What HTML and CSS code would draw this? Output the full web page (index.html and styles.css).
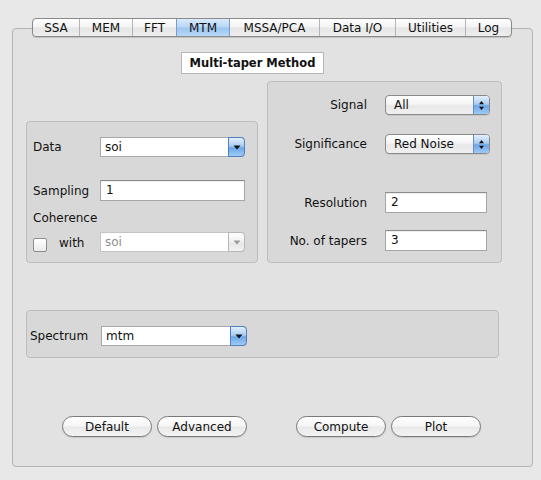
FILE: index.html
```html
<!DOCTYPE html>
<html>
<head>
<meta charset="utf-8">
<link rel="stylesheet" href="styles.css">
</head>
<body>
<div class="window">
  <div class="tabs">
    <div class="tab">SSA</div>
    <div class="tab">MEM</div>
    <div class="tab">FFT</div>
    <div class="tab selected">MTM</div>
    <div class="tab">MSSA/PCA</div>
    <div class="tab">Data I/O</div>
    <div class="tab">Utilities</div>
    <div class="tab">Log</div>
  </div>
  <div class="panel">
    <div class="title">Multi-taper Method</div>
    <div class="groups">
      <div class="group left-group">
        <div class="lrow first">
          <span class="label">Data</span>
          <div class="popup"><span class="ptext">soi</span><span class="pbtn"><svg width="8" height="5" viewBox="0 0 8 5"><path d="M0.5 0.5 L7.5 0.5 L4 4.5 Z" fill="#111"/></svg></span></div>
        </div>
        <div class="lrow sampling">
          <span class="label">Sampling</span>
          <div class="field">1</div>
        </div>
        <div class="coh">Coherence</div>
        <div class="lrow withrow">
          <span class="label checklabel"><span class="check"></span><span>with</span></span>
          <div class="popup disabled"><span class="ptext">soi</span><span class="pbtn"><svg width="8" height="5" viewBox="0 0 8 5"><path d="M0.5 0.5 L7.5 0.5 L4 4.5 Z" fill="#9a9a9a"/></svg></span></div>
        </div>
      </div>
      <div class="group right-group">
        <div class="rrow">
          <span class="rlabel">Signal</span>
          <div class="stepper"><span class="stext">All</span><span class="sbtn"><svg width="7" height="11" viewBox="0 0 7 11"><path d="M3.5 1 L6 4.2 L1 4.2 Z M1 6.8 L6 6.8 L3.5 10 Z" fill="#111"/></svg></span></div>
        </div>
        <div class="rrow sig">
          <span class="rlabel">Significance</span>
          <div class="stepper"><span class="stext">Red Noise</span><span class="sbtn"><svg width="7" height="11" viewBox="0 0 7 11"><path d="M3.5 1 L6 4.2 L1 4.2 Z M1 6.8 L6 6.8 L3.5 10 Z" fill="#111"/></svg></span></div>
        </div>
        <div class="rrow res">
          <span class="rlabel">Resolution</span>
          <div class="field rfield">2</div>
        </div>
        <div class="rrow tap">
          <span class="rlabel">No. of tapers</span>
          <div class="field rfield">3</div>
        </div>
      </div>
    </div>
    <div class="group spectrum">
      <span class="label slabel">Spectrum</span>
      <div class="popup"><span class="ptext">mtm</span><span class="pbtn"><svg width="8" height="5" viewBox="0 0 8 5"><path d="M0.5 0.5 L7.5 0.5 L4 4.5 Z" fill="#111"/></svg></span></div>
    </div>
    <div class="buttons">
      <div class="btn">Default</div>
      <div class="btn">Advanced</div>
      <div class="btn spacer">Compute</div>
      <div class="btn">Plot</div>
    </div>
  </div>
</div>
</body>
</html>
```

FILE: styles.css
```css
* { box-sizing: border-box; }
html, body { margin: 0; padding: 0; }
body {
  background: #e8e8e8;
  font-family: "DejaVu Sans", "Noto Sans", sans-serif;
  font-size: 12px;
  color: #111;
}
.window {
  width: 541px;
  height: 480px;
  padding-top: 18px;
  overflow: hidden;
}
.tabs {
  position: relative;
  z-index: 1;
  display: flex;
  width: 480px;
  height: 19px;
  margin-left: 32px;
  border: 1px solid #8a8a8a;
  border-radius: 4px;
  background: linear-gradient(#ffffff, #f3f3f3 45%, #e6e6e6 55%, #eeeeee);
  box-shadow: 0 1px 1px rgba(0,0,0,0.15);
  overflow: hidden;
}
.tab {
  height: 100%;
  display: flex;
  align-items: center;
  justify-content: center;
  border-left: 1px solid #b5b5b5;
}
.tab:first-child { border-left: none; }
.tab:nth-child(1) { width: 46px; }
.tab:nth-child(2) { width: 53px; }
.tab:nth-child(3) { width: 44px; }
.tab:nth-child(4) { width: 53px; }
.tab:nth-child(5) { width: 90px; }
.tab:nth-child(6) { width: 76px; }
.tab:nth-child(7) { width: 70px; }
.tab:nth-child(8) { flex: 1; }
.tab.selected {
  background: linear-gradient(#d9eafb, #b9d7f6 45%, #9cc5f0 55%, #b8d8f8);
  border-left-color: #7a9cc6;
}
.tab.selected + .tab { border-left-color: #7a9cc6; }
.panel {
  width: 521px;
  height: 439px;
  margin: -9px 0 0 12px;
  border: 1px solid #b4b4b4;
  border-radius: 4px;
  background: #e2e2e2;
  padding: 23px 0 0 13px;
}
.title {
  width: 143px;
  height: 22px;
  margin-left: 155px;
  background: #fff;
  border: 1px solid #b8b8b8;
  font-weight: bold;
  font-size: 11.5px;
  display: flex;
  align-items: center;
  justify-content: center;
}
.groups {
  display: flex;
  align-items: flex-end;
  gap: 9px;
  margin-top: 7px;
  height: 182px;
}
.group {
  background: #d8d8d8;
  border: 1px solid #bdbdbd;
  border-radius: 4px;
}
.left-group {
  width: 232px;
  height: 142px;
  padding: 15px 12px 0 6px;
}
.lrow {
  display: flex;
  align-items: center;
  height: 20px;
}
.label { width: 67px; flex: none; }
.sampling { margin-top: 23px; height: 21px; }
.coh { margin-top: 8px; height: 19px; line-height: 19px; }
.withrow { margin-top: 4px; }
.checklabel { display: flex; align-items: center; }
.check {
  width: 14px;
  height: 14px;
  border: 1px solid #8d8d8d;
  border-radius: 2px;
  background: linear-gradient(#ffffff, #ececec);
  margin-right: 12px;
  margin-top: 5px;
}
.checklabel span:last-child { margin-top: 2px; }
.popup {
  width: 146px;
  height: 20px;
  display: flex;
  background: #fff;
  border: 1px solid #a8a8a8;
  border-right: none;
  border-radius: 0 4px 4px 0;
}
.ptext { flex: 1; padding-left: 4px; line-height: 18px; }
.pbtn {
  width: 17px;
  margin: -1px 0;
  border: 1px solid #4f7fbf;
  border-radius: 0 4px 4px 0;
  background: linear-gradient(#e4effc, #a8cdf3 45%, #6da6e9 55%, #9fcaf6);
  display: flex;
  align-items: center;
  justify-content: center;
}
.popup.disabled { border-color: #c4c4c4; }
.popup.disabled .ptext { color: #8f8f8f; }
.popup.disabled .pbtn {
  border-color: #b6b6b6;
  background: linear-gradient(#ffffff, #f0f0f0 50%, #e6e6e6 55%, #f2f2f2);
}
.field {
  width: 146px;
  height: 21px;
  background: #fff;
  border: 1px solid #a6a6a6;
  border-top-color: #8c8c8c;
  box-shadow: inset 0 1px 1px rgba(0,0,0,0.08);
  padding-left: 5px;
  line-height: 19px;
}
.right-group {
  width: 235px;
  height: 182px;
  padding: 13px 0 0 0;
}
.rrow {
  display: flex;
  align-items: center;
  height: 20px;
}
.rlabel {
  width: 99px;
  text-align: right;
  margin-right: 18px;
  flex: none;
}
.sig { margin-top: 19px; }
.res { margin-top: 38px; height: 21px; }
.tap { margin-top: 17px; height: 21px; }
.rfield { width: 102px; }
.stepper {
  width: 105px;
  height: 20px;
  display: flex;
  border: 1px solid #8a8a8a;
  border-radius: 4px;
  background: linear-gradient(#ffffff, #f4f4f4 45%, #e8e8e8 55%, #f0f0f0);
  overflow: hidden;
  box-shadow: 0 1px 0 rgba(0,0,0,0.08);
}
.stext { flex: 1; padding-left: 8px; line-height: 18px; }
.sbtn {
  width: 16px;
  border-left: 1px solid #6b8fbd;
  background: linear-gradient(#e4effc, #a8cdf3 45%, #6da6e9 55%, #9fcaf6);
  display: flex;
  align-items: center;
  justify-content: center;
}
.spectrum {
  margin-top: 47px;
  width: 473px;
  height: 48px;
  display: flex;
  align-items: flex-start;
  padding: 15px 0 0 3px;
}
.slabel { width: 71px; line-height: 20px; }
.buttons {
  display: flex;
  margin-top: 58px;
  margin-left: 36px;
}
.btn {
  width: 90px;
  height: 21px;
  margin-right: 5px;
  border: 1px solid #7a7a7a;
  border-radius: 11px;
  background: linear-gradient(#ffffff, #f6f6f6 45%, #e9e9e9 55%, #f3f3f3);
  box-shadow: 0 1px 1px rgba(0,0,0,0.12);
  display: flex;
  align-items: center;
  justify-content: center;
}
.btn.spacer { margin-left: 44px; }
```
